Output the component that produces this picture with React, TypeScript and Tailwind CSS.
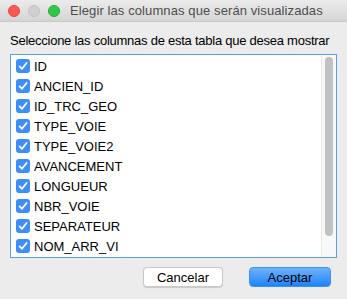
const columns = [
  'ID',
  'ANCIEN_ID',
  'ID_TRC_GEO',
  'TYPE_VOIE',
  'TYPE_VOIE2',
  'AVANCEMENT',
  'LONGUEUR',
  'NBR_VOIE',
  'SEPARATEUR',
  'NOM_ARR_VI',
];

function CheckMark() {
  return (
    <svg viewBox="0 0 14 14" className="h-[14px] w-[14px]">
      <path d="M3.6 7.4 L6 9.8 L10.6 4" fill="none" stroke="white" strokeWidth="1.8" strokeLinecap="round" strokeLinejoin="round" />
    </svg>
  );
}

export default function App() {
  return (
    <div className="w-[347px] h-[299px] bg-[#ececec] font-['Liberation_Sans',Arial,sans-serif] text-[13px] text-black overflow-hidden">
      {/* Title bar */}
      <div className="h-[22px] flex items-center border-b border-[#c9c9c9] bg-gradient-to-b from-[#ebebeb] to-[#d5d5d5]">
        <div className="flex gap-[8px] pl-[8px]">
          <span className="h-[12px] w-[12px] rounded-full bg-[#fc5753] border border-[#df4744]" />
          <span className="h-[12px] w-[12px] rounded-full bg-[#d0d0d0] border border-[#c2c2c2]" />
          <span className="h-[12px] w-[12px] rounded-full bg-[#33c748] border border-[#27aa35]" />
        </div>
        <div className="ml-[10px] text-[13px] text-[#4d4d4d] leading-none tracking-[0.1px] whitespace-nowrap">Elegir las columnas que serán visualizadas</div>
      </div>

      <div className="px-[10px] pt-[11px]">
        <div className="leading-[16px] h-[20px] whitespace-nowrap tracking-[-0.25px]">Seleccione las columnas de esta tabla que desea mostrar</div>

        {/* List */}
        <div className="mt-[1px] h-[204px] border border-[#5a9ee8] bg-white flex">
          <div className="flex-1 pt-[1px]">
            {columns.map((c) => (
              <div key={c} className="h-[20px] flex items-center pl-[5px]">
                <span className="h-[14px] w-[14px] rounded-[3px] bg-[#3e8ef7] flex items-center justify-center">
                  <CheckMark />
                </span>
                <span className="ml-[4px] leading-none">{c}</span>
              </div>
            ))}
          </div>
          <div className="w-[15px] bg-[#f8f8f8] border-l border-[#e8e8e8] pt-[2px] flex justify-center">
            <div className="w-[8px] h-[179px] rounded-full bg-[#c1c1c1]" />
          </div>
        </div>

        {/* Buttons */}
        <div className="mt-[9px] flex justify-end gap-[26px] pr-[6px]">
          <button className="w-[80px] h-[20px] rounded-[4px] bg-white border border-[#c8c8c8] shadow-[0_0.5px_1px_rgba(0,0,0,0.15)] text-[13px] leading-none">
            Cancelar
          </button>
          <button className="w-[82px] h-[20px] rounded-[4px] bg-gradient-to-b from-[#6cb3fa] to-[#1a82fb] border border-[#3f8ff2] text-[13px] leading-none text-black">
            Aceptar
          </button>
        </div>
      </div>
    </div>
  );
}
